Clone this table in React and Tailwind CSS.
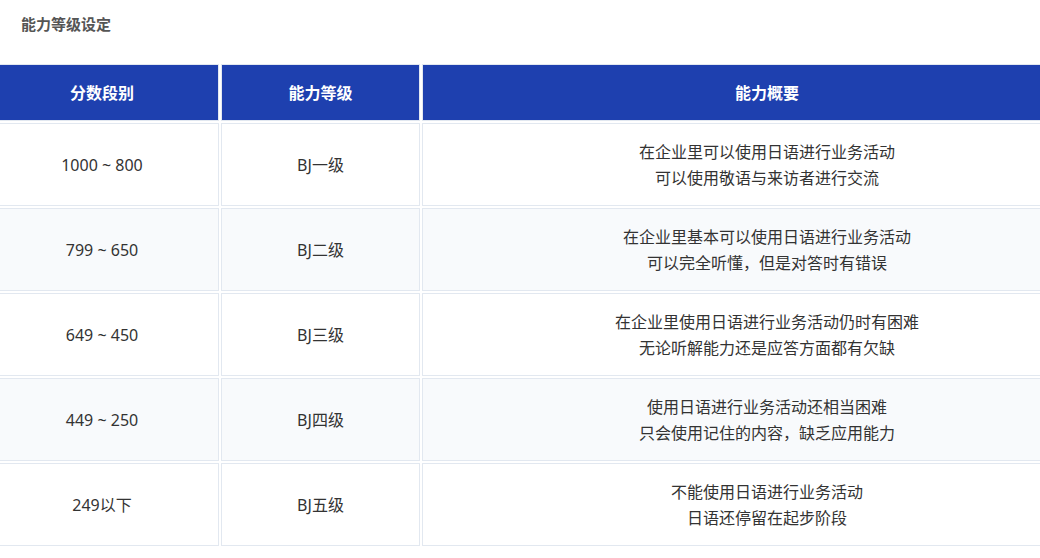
import React from "react";

const rows = [
  ["1000 ~ 800", "BJ一级", ["在企业里可以使用日语进行业务活动", "可以使用敬语与来访者进行交流"]],
  ["799 ~ 650", "BJ二级", ["在企业里基本可以使用日语进行业务活动", "可以完全听懂，但是对答时有错误"]],
  ["649 ~ 450", "BJ三级", ["在企业里使用日语进行业务活动仍时有困难", "无论听解能力还是应答方面都有欠缺"]],
  ["449 ~ 250", "BJ四级", ["使用日语进行业务活动还相当困难", "只会使用记住的内容，缺乏应用能力"]],
  ["249以下", "BJ五级", ["不能使用日语进行业务活动", "日语还停留在起步阶段"]],
];

export default function App() {
  return (
    <div
      className="w-[1040px] h-[558px] overflow-hidden bg-white"
      style={{ fontFamily: '"Noto Sans", "Noto Sans CJK SC", sans-serif' }}
    >
      <div className="h-[64px] pl-[21px] pt-[13px] text-[15px] leading-[22px] font-bold text-[#555]">
        能力等级设定
      </div>
      <div className="ml-[-15px] w-[1127px] grid grid-cols-[234px_199px_690px] gap-[2px] text-[16px] text-[#333]">
        {["分数段别", "能力等级", "能力概要"].map((h) => (
          <div
            key={h}
            className="h-[57px] flex items-center justify-center bg-[#1e40af] border border-[#e2e8f0] text-white font-bold"
          >
            {h}
          </div>
        ))}
        {rows.map((r, i) => {
          const bg = i % 2 === 1 ? "bg-[#f8fafc]" : "bg-white";
          return (
            <React.Fragment key={i}>
              <div className={`h-[83px] flex items-center justify-center border border-[#e2e8f0] whitespace-pre ${bg}`}>
                {r[0]}
              </div>
              <div className={`h-[83px] flex items-center justify-center border border-[#e2e8f0] ${bg}`}>
                {r[1]}
              </div>
              <div className={`h-[83px] flex flex-col items-center justify-center border border-[#e2e8f0] leading-[26px] ${bg}`}>
                <div>{r[2][0]}</div>
                <div>{r[2][1]}</div>
              </div>
            </React.Fragment>
          );
        })}
      </div>
    </div>
  );
}
